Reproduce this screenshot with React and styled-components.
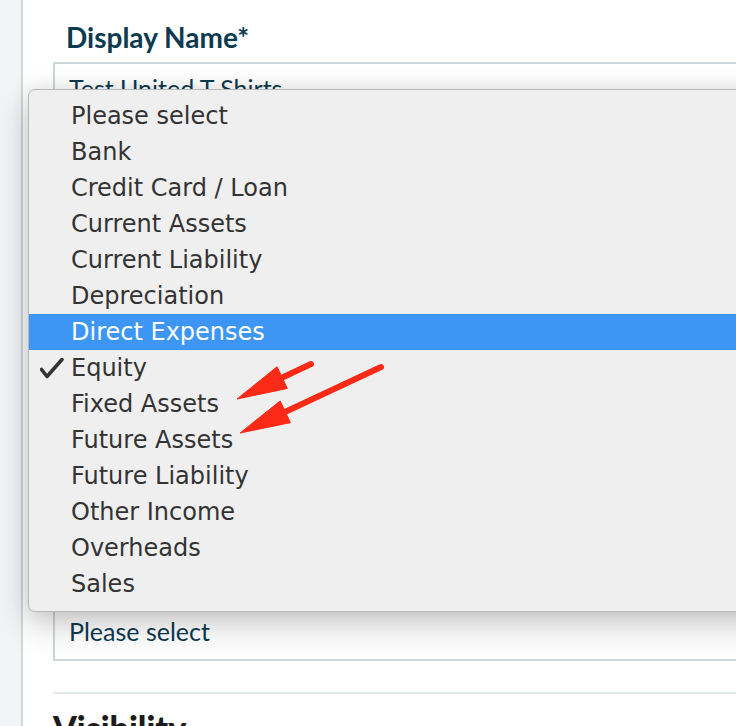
import React from "react";
import styled, { createGlobalStyle } from "styled-components";

const GlobalStyle = createGlobalStyle`
  html, body {
    margin: 0;
    padding: 0;
    background: #ffffff;
  }
`;

const St = {
  Page: styled.div`
    position: relative;
    display: flex;
    width: 736px;
    height: 726px;
    overflow: hidden;
    background: #ffffff;
  `,

  Sidebar: styled.div`
    width: 21px;
    flex-shrink: 0;
    background-color: #f2f4f5;
    border-right: 2px solid #cfd9dd;
  `,

  Main: styled.div`
    flex: 1;
    padding-left: 30px;
    font-family: Lato, "Liberation Sans", sans-serif;
    color: #0c3a4f;
  `,

  FieldLabel: styled.div`
    margin-left: 13px;
    padding-top: ${({ top }) => top || "0"};
    height: 34px;
    font-size: 28px;
    font-weight: 700;
    line-height: 34px;
  `,

  Field: styled.div`
    display: flex;
    align-items: center;
    box-sizing: border-box;
    height: ${({ height }) => height || "54px"};
    margin-top: ${({ marginTop }) => marginTop || "0"};
    padding: 0 0 ${({ lift }) => lift || "0"} 14px;
    border: 2px solid #ccd7dc;
    border-right: none;
    font-size: 25px;
    white-space: nowrap;
    overflow: hidden;
  `,

  Divider: styled.div`
    height: 2px;
    margin-top: 31px;
    background-color: #e3e8eb;
  `,

  SectionTitle: styled.div`
    padding-top: 14px;
    font-size: 34px;
    font-weight: 900;
    line-height: 40px;
    color: #1b1b1b;
  `,

  Menu: styled.div`
    position: absolute;
    left: 28px;
    top: 89px;
    width: 780px;
    padding: 8px 0 9px;
    background-color: #efefef;
    border: 1px solid #b9b9b9;
    border-radius: 7px;
    box-shadow: 0 12px 34px rgba(0, 0, 0, 0.22), 0 0 18px rgba(0, 0, 0, 0.08);
    font-family: "DejaVu Sans", "Liberation Sans", sans-serif;
    font-size: 24px;
  `,

  MenuItem: styled.div`
    position: relative;
    height: 36px;
    padding-left: 42px;
    line-height: 36px;
    color: ${({ active }) => (active ? "#ffffff" : "#333333")};
    background-color: ${({ active }) => (active ? "#3d96f4" : "transparent")};
  `,

  Check: styled.svg`
    position: absolute;
    left: 11px;
    top: 8px;
  `,

  Arrows: styled.svg`
    position: absolute;
    left: 0;
    top: 0;
    pointer-events: none;
  `,
};

const options = [
  "Please select",
  "Bank",
  "Credit Card / Loan",
  "Current Assets",
  "Current Liability",
  "Depreciation",
  "Direct Expenses",
  "Equity",
  "Fixed Assets",
  "Future Assets",
  "Future Liability",
  "Other Income",
  "Overheads",
  "Sales",
];

const Arrow = ({ x1, y1, x2, y2 }) => {
  // head drawn as a triangle at (x2, y2), shaft stops inside it
  const dx = x2 - x1;
  const dy = y2 - y1;
  const len = Math.hypot(dx, dy);
  const ux = dx / len;
  const uy = dy / len;
  const headLen = 50;
  const headHalf = 12;
  const bx = x2 - ux * headLen;
  const by = y2 - uy * headLen;
  const p1 = `${bx - uy * headHalf},${by + ux * headHalf}`;
  const p2 = `${bx + uy * headHalf},${by - ux * headHalf}`;
  const sx = x2 - ux * (headLen - 8);
  const sy = y2 - uy * (headLen - 8);
  return (
    <g fill="#fb2a16" stroke="#fb2a16">
      <line x1={x1} y1={y1} x2={sx} y2={sy} strokeWidth="6" strokeLinecap="round" />
      <polygon points={`${x2},${y2} ${p1} ${p2}`} strokeWidth="1" strokeLinejoin="round" />
    </g>
  );
};

const App = () => {
  return (
    <>
      <GlobalStyle />
      <St.Page>
        <St.Sidebar />
        <St.Main>
          <St.FieldLabel top="20px">Display Name*</St.FieldLabel>
          <St.Field marginTop="8px" lift="2px">Test United T Shirts</St.Field>
          <St.FieldLabel top="18px">Code</St.FieldLabel>
          <St.Field marginTop="8px">TUTS</St.Field>
          <St.FieldLabel top="18px">Description</St.FieldLabel>
          <St.Field marginTop="8px" height="256px" />
          <St.FieldLabel top="18px">Account Type*</St.FieldLabel>
          <St.Field marginTop="8px" height="55px" lift="6px">Please select</St.Field>
          <St.Divider />
          <St.SectionTitle>Visibility</St.SectionTitle>
        </St.Main>

        <St.Menu>
          {options.map((option) => (
            <St.MenuItem key={option} active={option === "Direct Expenses"}>
              {option === "Equity" && (
                <St.Check width="24" height="22" viewBox="0 0 24 22">
                  <polyline
                    points="1.5,11.5 7,18.5 22,1.5"
                    fill="none"
                    stroke="#333333"
                    strokeWidth="3.6"
                    strokeLinecap="round"
                    strokeLinejoin="round"
                  />
                </St.Check>
              )}
              {option}
            </St.MenuItem>
          ))}
        </St.Menu>

        <St.Arrows width="736" height="726" viewBox="0 0 736 726">
          <Arrow x1={311} y1={364} x2={237} y2={399} />
          <Arrow x1={381} y1={367} x2={240} y2={433} />
        </St.Arrows>
      </St.Page>
    </>
  );
};

export default App;
